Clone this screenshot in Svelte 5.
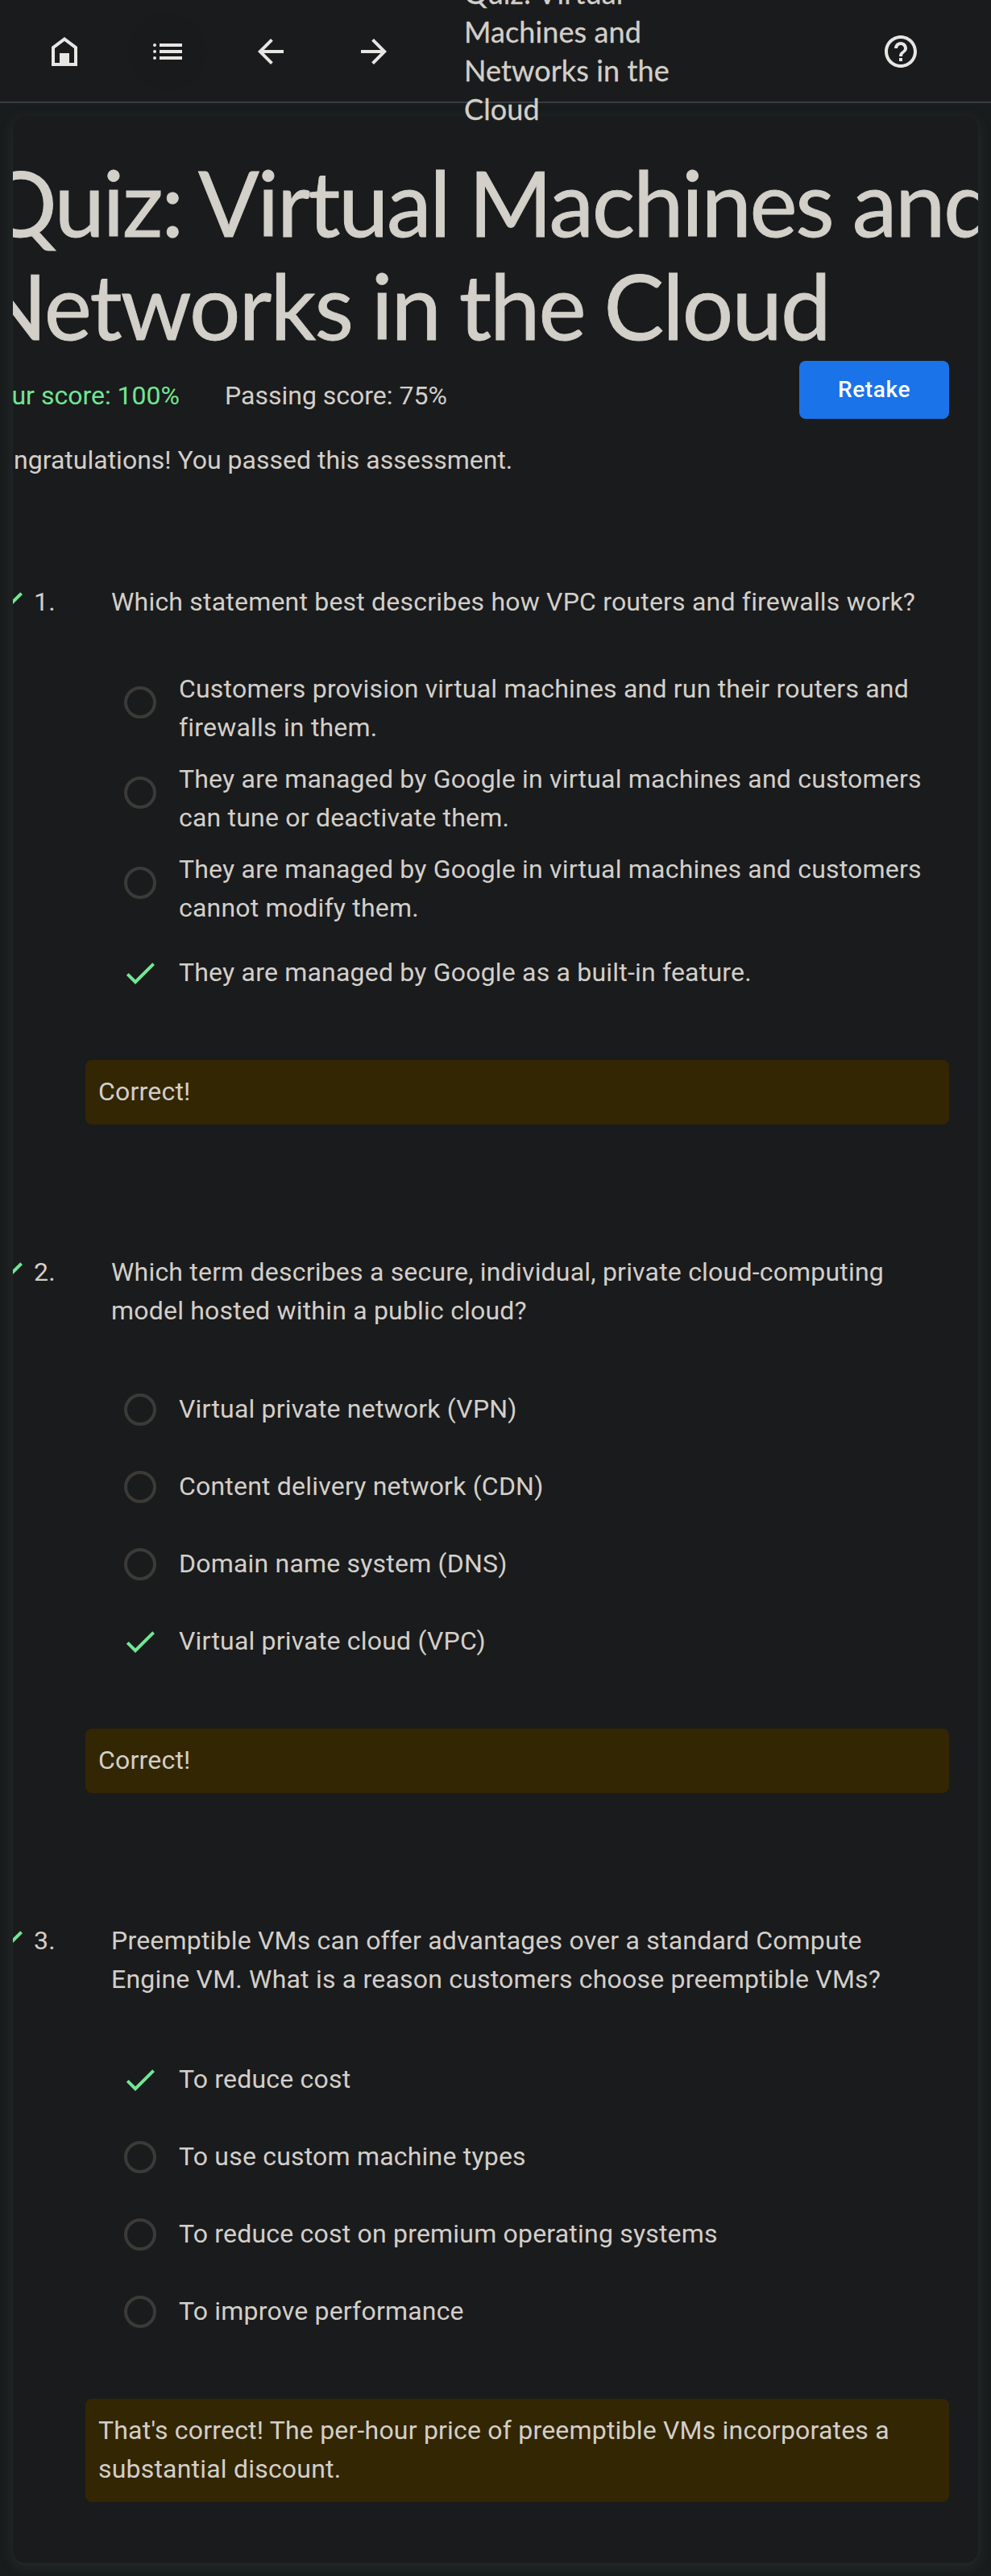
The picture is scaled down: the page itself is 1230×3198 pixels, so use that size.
<script>
  const questions = [
    {
      text: 'Which statement best describes how VPC routers and firewalls work?',
      options: [
        'Customers provision virtual machines and run their routers and firewalls in them.',
        'They are managed by Google in virtual machines and customers can tune or deactivate them.',
        'They are managed by Google in virtual machines and customers cannot modify them.',
        'They are managed by Google as a built-in feature.'
      ],
      answer: 3,
      feedback: 'Correct!'
    },
    {
      tight: true,
      text: 'Which term describes a secure, individual, private cloud-computing model hosted within a public cloud?',
      options: [
        'Virtual private network (VPN)',
        'Content delivery network (CDN)',
        'Domain name system (DNS)',
        'Virtual private cloud (VPC)'
      ],
      answer: 3,
      feedback: 'Correct!'
    },
    {
      text: 'Preemptible VMs can offer advantages over a standard Compute Engine VM. What is a reason customers choose preemptible VMs?',
      options: [
        'To reduce cost',
        'To use custom machine types',
        'To reduce cost on premium operating systems',
        'To improve performance'
      ],
      answer: 0,
      feedback: "That's correct! The per-hour price of preemptible VMs incorporates a substantial discount."
    }
  ];

  const nav = [
    { label: 'Home', d: 'M4 21V9l8-6 8 6v12H4zm2-2h3v-6h6v6h3v-9l-6-4.5L6 10v9z' },
    {
      label: 'Contents',
      active: true,
      d: 'M7 7h14v2H7zM7 11h14v2H7zM7 15h14v2H7zM4 7a1 1 0 1 0 0 2 1 1 0 0 0 0-2zM4 11a1 1 0 1 0 0 2 1 1 0 0 0 0-2zM4 15a1 1 0 1 0 0 2 1 1 0 0 0 0-2z'
    },
    { label: 'Previous', d: 'M20 11H7.83l5.59-5.59L12 4l-8 8 8 8 1.41-1.41L7.83 13H20v-2z' },
    { label: 'Next', d: 'M12 4l-1.41 1.41L16.17 11H4v2h12.17l-5.58 5.59L12 20l8-8z' }
  ];
  const help =
    'M11 18h2v-2h-2v2zm1-16C6.48 2 2 6.48 2 12s4.48 10 10 10 10-4.48 10-10S17.52 2 12 2zm0 18c-4.41 0-8-3.59-8-8s3.59-8 8-8 8 3.59 8 8-3.59 8-8 8zm0-14c-2.21 0-4 1.79-4 4h2c0-1.1.9-2 2-2s2 .9 2 2c0 2-3 1.75-3 5h2c0-2.25 3-2.5 3-5 0-2.21-1.79-4-4-4z';
  const check = 'M9 16.17L4.83 12l-1.42 1.41L9 19 21 7l-1.41-1.41z';
</script>

{#snippet icon(d)}
  <svg class="icon" viewBox="0 0 24 24" aria-hidden="true"><path {d} /></svg>
{/snippet}

<header>
  <nav>
    {#each nav as item}
      <button class="icon-button" class:active={item.active} aria-label={item.label}>{@render icon(item.d)}</button>
    {/each}
  </nav>
  <div class="title">Quiz: Virtual<br />Machines and<br />Networks in the<br />Cloud</div>
  <button class="icon-button" aria-label="Help">{@render icon(help)}</button>
</header>

<main>
  <div class="card">
    <h1>
      <span class="first">Quiz: Virtual Machines and</span>
      <span class="second">Networks in the Cloud</span>
    </h1>
    <div class="summary">
      <span class="score">Your score: 100%</span>
      <span>Passing score: 75%</span>
      <button class="retake">Retake</button>
    </div>
    <p class="message">Congratulations! You passed this assessment.</p>

    <div class="questions">
      {#each questions as q, i}
        <section>
          <div class="question" class:tight={q.tight}>
            <span class="mark">{@render icon(check)}</span>
            <span class="number">{i + 1}.</span>
            <p>{q.text}</p>
          </div>
          <ul>
            {#each q.options as option, j}
              <li>
                <span class="control">
                  {#if j === q.answer}{@render icon(check)}{:else}<span class="radio"></span>{/if}
                </span>
                <span class="label">{option}</span>
              </li>
            {/each}
          </ul>
          <div class="feedback">{q.feedback}</div>
        </section>
      {/each}
    </div>
  </div>
</main>

<style>
  :global(body) {
    margin: 0;
    background: #191c1d;
    overflow-x: hidden;
  }
  header,
  main {
    font-family: Roboto, 'Liberation Sans', sans-serif;
    color: #d3cfc9;
    box-sizing: border-box;
  }
  p,
  h1,
  ul {
    margin: 0;
    padding: 0;
  }
  button {
    border: 0;
    padding: 0;
    font: inherit;
  }
  .icon {
    display: block;
    width: 48px;
    height: 48px;
    fill: currentColor;
    flex: none;
  }
  header {
    position: relative;
    z-index: 1;
    display: flex;
    align-items: flex-start;
    height: 128px;
    padding: 16px 64px 0 32px;
    background: #1a1b1d;
    border-bottom: 2px solid #3b3c40;
  }
  nav {
    display: flex;
    gap: 32px;
  }
  .icon-button {
    display: grid;
    place-items: center;
    width: 96px;
    height: 96px;
    border-radius: 50%;
    background: transparent;
    color: #e8e6e3;
  }
  .icon-button.active {
    background: #191a1c;
  }
  .title {
    flex: 1;
    margin: -49px 0 0 64px;
    font-family: Lato, sans-serif;
    font-size: 36px;
    line-height: 48px;
    letter-spacing: 0.1px;
    white-space: nowrap;
    -webkit-text-stroke: 0.3px currentColor;
  }
  main {
    padding: 16px;
  }
  .card {
    height: 3038px;
    box-sizing: border-box;
    padding: 43px 36px 0 0;
    border-radius: 16px;
    background: #1a1b1d;
    box-shadow: 0 2px 4px rgba(60, 66, 66, 0.15), 0 4px 12px 4px rgba(50, 58, 58, 0.35);
    overflow: hidden;
    font-size: 32px;
    line-height: 48px;
  }
  /* The content column is wider than the card and is clipped by its edges. */
  h1 {
    font-family: Lato, sans-serif;
    font-weight: 400;
    font-size: 112px;
    line-height: 128px;
    white-space: nowrap;
    -webkit-text-stroke: 0.9px currentColor;
  }
  h1 span {
    display: block;
  }
  .first {
    margin-left: -35px;
    letter-spacing: -2.4px;
    word-spacing: -2px;
  }
  .second {
    margin-left: -43px;
    letter-spacing: -1.95px;
    word-spacing: -3px;
  }
  .summary {
    display: flex;
    align-items: flex-start;
    height: 72px;
    margin: 5px 0 0 -38px;
  }
  .summary span {
    padding-top: 19px;
  }
  .summary .score {
    margin-right: 56px;
    color: #72e693;
  }
  .retake {
    margin-left: auto;
    width: 186px;
    height: 72px;
    border-radius: 8px;
    background: #1a73e8;
    color: #fff;
    font-size: 28px;
    font-weight: 500;
    letter-spacing: 0.6px;
  }
  .message {
    margin: 27px 0 0 -38px;
  }
  .questions {
    margin: 128px 0 0 -30px;
    display: flex;
    flex-direction: column;
    gap: 159px;
    letter-spacing: 0.2px;
  }
  .question {
    display: flex;
    align-items: flex-start;
    margin-bottom: 53px;
  }
  .question.tight {
    margin-bottom: 51px;
  }
  .question p {
    padding-right: 20px;
  }
  .mark {
    padding-top: 1px;
    height: 47px;
    color: #72e693;
  }
  .number {
    width: 96px;
    padding-left: 8px;
    flex: none;
  }
  ul {
    list-style: none;
    margin: 0 20px 60px 164px;
  }
  li {
    display: flex;
    align-items: flex-start;
    gap: 24px;
    min-height: 96px;
    box-sizing: border-box;
    padding: 8px 0;
  }
  .control {
    display: grid;
    place-items: center;
    width: 48px;
    height: 80px;
    flex: none;
    color: #72e693;
  }
  .radio {
    width: 32px;
    height: 32px;
    border: 4px solid #3c3a37;
    border-radius: 50%;
  }
  .label {
    align-self: center;
    margin: -1px 0 1px;
  }
  .feedback {
    margin-left: 120px;
    padding: 15px 16px 17px;
    border-radius: 8px;
    background: #332602;
  }
</style>
